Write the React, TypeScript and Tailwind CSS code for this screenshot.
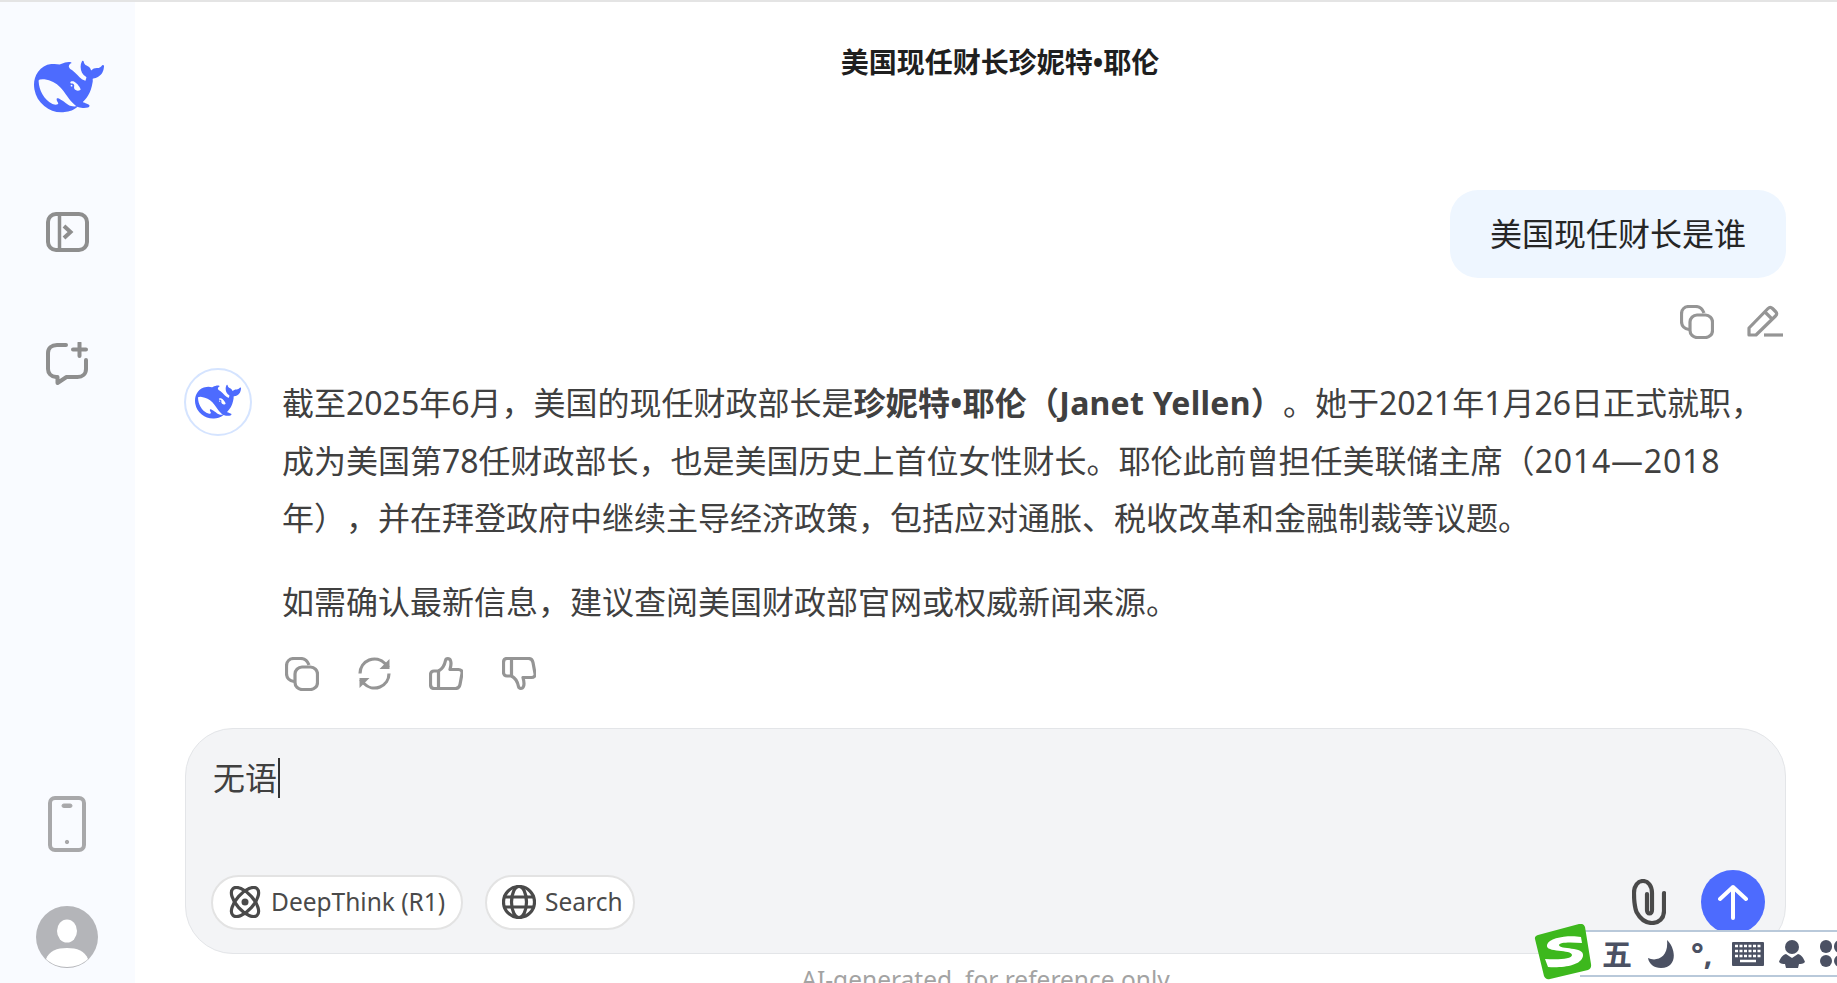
const whale =
  "M23.748 4.482c-.254-.124-.364.113-.512.234-.051.039-.094.09-.137.136-.372.397-.806.657-1.373.626-.829-.046-1.537.214-2.163.848-.133-.782-.575-1.248-1.247-1.548-.352-.156-.708-.311-.955-.65-.172-.241-.219-.51-.305-.774-.055-.16-.11-.323-.293-.35-.2-.031-.278.136-.356.276-.313.572-.434 1.202-.422 1.84.027 1.436.633 2.58 1.838 3.393.137.093.172.187.129.323-.082.28-.18.552-.266.833-.055.179-.137.217-.329.14a5.526 5.526 0 01-1.736-1.18c-.857-.828-1.631-1.742-2.597-2.458a11.365 11.365 0 00-.689-.471c-.985-.957.13-1.743.388-1.836.27-.098.093-.432-.779-.428-.872.004-1.67.295-2.687.684a3.055 3.055 0 01-.465.137 9.597 9.597 0 00-2.883-.102c-1.885.21-3.39 1.102-4.497 2.623C.082 8.606-.231 10.684.152 12.85c.403 2.284 1.569 4.175 3.36 5.653 1.858 1.533 3.997 2.284 6.438 2.14 1.482-.085 3.133-.284 4.994-1.86.47.234.962.327 1.78.397.63.059 1.236-.03 1.705-.128.735-.156.684-.837.419-.961-2.155-1.004-1.682-.595-2.113-.926 1.096-1.296 2.746-2.642 3.392-7.003.05-.347.007-.565 0-.845-.004-.17.035-.237.23-.256a4.173 4.173 0 001.545-.475c1.396-.763 1.96-2.015 2.093-3.517.02-.23-.004-.467-.247-.588zM11.581 18c-2.089-1.642-3.102-2.183-3.52-2.16-.392.024-.321.471-.235.763.09.288.207.486.371.739.114.167.192.416-.113.603-.673.416-1.842-.14-1.897-.167-1.361-.802-2.5-1.86-3.301-3.307-.774-1.393-1.224-2.887-1.298-4.482-.02-.386.093-.522.477-.592a4.696 4.696 0 011.529-.039c2.132.312 3.946 1.265 5.468 2.774.868.86 1.525 1.887 2.202 2.891.72 1.066 1.494 2.082 2.48 2.914.348.292.625.514.891.677-.802.09-2.14.11-3.054-.614zm1-6.44a.306.306 0 01.415-.287.302.302 0 01.2.288.306.306 0 01-.31.307.303.303 0 01-.304-.308zm3.11 1.596c-.2.081-.399.151-.59.16a1.245 1.245 0 01-.798-.254c-.274-.23-.47-.358-.552-.758a1.73 1.73 0 01.016-.588c.07-.327-.008-.537-.239-.727-.187-.156-.426-.199-.688-.199a.559.559 0 01-.254-.078c-.11-.054-.2-.19-.114-.358.028-.054.16-.186.192-.21.356-.202.767-.136 1.146.016.352.144.618.408 1.001.782.391.451.462.576.685.914.176.265.336.537.445.848.067.195-.019.354-.25.452z";

function Whale({ className }: { className: string }) {
  return (
    <svg viewBox="0 0 24 24" className={className} fill="#4d6bfe">
      <path d={whale} fillRule="nonzero" />
    </svg>
  );
}

function PanelIcon() {
  return (
    <svg viewBox="0 0 43 40" className="h-[40px] w-[43px]" fill="none" stroke="#8e8e8e" strokeWidth="4">
      <rect x="2" y="2" width="39" height="36" rx="8" />
      <path d="M13.500 2v36" strokeWidth="3.500" />
      <path d="M18 14l6.500 6-6.500 6" strokeWidth="4" />
    </svg>
  );
}

function NewChatIcon() {
  return (
    <svg viewBox="0 0 42 43" className="h-[43px] w-[42px]" fill="none" stroke="#8e8e8e" strokeWidth="4" strokeLinecap="round">
      <path d="M20 3H11C5.500 3 2 6.500 2 11v16c0 4 3 7.500 8 8h1.500v6l9-6h11c5 0 8.500-3 8.500-8v-9" strokeLinejoin="round" />
      <path d="M33.500 1v13M27 7.500h13" />
    </svg>
  );
}

function PhoneIcon() {
  return (
    <svg viewBox="0 0 38 56" className="h-[56px] w-[38px]" fill="none" stroke="#a8a8aa" strokeWidth="4">
      <rect x="2" y="2" width="34" height="52" rx="5" />
      <rect x="14" y="8" width="10" height="3.500" rx="1.750" fill="#a8a8aa" strokeWidth="1" />
      <circle cx="19" cy="46" r="1.700" fill="#a8a8aa" strokeWidth="1" />
    </svg>
  );
}

function UserIcon() {
  return (
    <svg viewBox="0 0 62 62" className="h-[62px] w-[62px]">
      <circle cx="31" cy="31" r="31" fill="#b4b5b9" />
      <ellipse cx="31" cy="25" rx="10" ry="11.500" fill="#fff" />
      <path d="M10 53c3-8 11-11 21-11s18 3 21 11c-5 5-13 8-21 8s-16-3-21-8z" fill="#fff" />
    </svg>
  );
}

function CopyIcon() {
  return (
    <svg viewBox="0 0 34 34" className="h-[34px] w-[34px]" fill="none" stroke="#959595" strokeWidth="3.200">
      <rect x="10" y="10" width="22.500" height="22.500" rx="7" />
      <path d="M9 24.500C4.500 24 1.500 21 1.500 16.500V9c0-4.500 3-7.500 7.500-7.500h6.500c4 0 7 2.500 8.500 6.500" />
    </svg>
  );
}

function PencilIcon() {
  return (
    <svg viewBox="0 0 36 32" className="h-[32px] w-[36px]" fill="none" stroke="#959595" strokeWidth="3.200" strokeLinejoin="round">
      <path d="M2 23L21 3.500c1.500-1.500 3-1.500 4.500 0l3 3c1.500 1.500 1.500 3 0 4.500L9 30H2z" />
      <path d="M18 7l7.500 7.500" />
      <path d="M17 30h19" />
    </svg>
  );
}

function RefreshIcon() {
  return (
    <svg viewBox="0 0 33 33" className="h-[33px] w-[33px]" fill="none" stroke="#959595" strokeWidth="3.200">
      <path d="M2 16.500A14.500 14.500 0 0 1 27 6.500l3.500 4" />
      <path d="M31 16.500A14.500 14.500 0 0 1 6 26.500l-3.500-4" />
      <path d="M31.500 2v10h-10z" fill="#959595" stroke="none" />
      <path d="M1.500 31V21h10z" fill="#959595" stroke="none" />
    </svg>
  );
}

function ThumbUpIcon() {
  return (
    <svg viewBox="0 0 34 33" className="h-[33px] w-[34px]" fill="none" stroke="#959595" strokeWidth="3.200" strokeLinejoin="round">
      <path d="M9.500 14H5c-2 0-3.500 1.500-3.500 3.500v10c0 2.500 1.500 4 3.500 4h4.500z" />
      <path d="M9.500 14c3-1.500 6-5.500 7-10.500.5-2.500 4-2.500 5 0 1 2.500.5 5.500-.5 9h8.500c2.500 0 4 1.500 3.500 4l-2 11c-.5 2.500-2 4-4.500 4H9.500" />
    </svg>
  );
}

function ThumbDownIcon() {
  return (
    <svg viewBox="0 0 34 33" className="h-[33px] w-[34px]" fill="none" stroke="#959595" strokeWidth="3.200" strokeLinejoin="round">
      <path d="M9.500 19H5c-2 0-3.500-1.500-3.500-3.500v-10c0-2.500 1.500-4 3.500-4h4.500z" />
      <path d="M9.500 19c3 1.500 6 5.500 7 10.500.5 2.500 4 2.500 5 0 1-2.500.5-5.500-.5-9h8.500c2.500 0 4-1.500 3.500-4l-2-11c-.5-2.500-2-4-4.500-4H9.500" />
    </svg>
  );
}

function AtomIcon() {
  return (
    <svg viewBox="0 0 32 32" className="h-[32px] w-[32px]" fill="none" stroke="#4a4a4a" strokeWidth="3.200">
      <ellipse cx="16" cy="16" rx="8.500" ry="18" transform="rotate(-42 16 16)" />
      <ellipse cx="16" cy="16" rx="8.500" ry="18" transform="rotate(42 16 16)" />
      <circle cx="16" cy="16" r="3.500" fill="#4a4a4a" stroke="none" />
    </svg>
  );
}

function GlobeIcon() {
  return (
    <svg viewBox="0 0 34 34" className="h-[34px] w-[34px]" fill="none" stroke="#4a4a4a" strokeWidth="3.200">
      <circle cx="17" cy="17" r="15.500" />
      <ellipse cx="17" cy="17" rx="7.500" ry="15.500" />
      <path d="M1.500 12h31M1.500 22h31" />
    </svg>
  );
}

function ClipIcon() {
  return (
    <svg viewBox="0 0 34 46" className="h-[46px] w-[34px]" fill="none" stroke="#4a4a4a" strokeWidth="4.200" strokeLinecap="round">
      <path d="M32 14v18c0 7.500-5 12-12 12S8 39.500 4.500 33C2 26 2 20 2 14 2 6.500 6 2 11 2s9 4.500 9 12v17c0 2-1 3.500-2.500 3.500S15 33 15 31V15" />
    </svg>
  );
}

function ImeBar() {
  return (
    <div className="absolute left-[1534px] top-[924px] flex h-[54px] w-[303px] items-center">
      <div className="absolute left-[46px] top-[6px] flex h-[47px] w-[257px] items-center overflow-hidden border-y-2 border-[#b9c9da] bg-white pl-[22px] text-[#4b5163]">
        <span className="w-[46px] shrink-0 text-[30px] leading-none font-bold">五</span>
        <svg viewBox="0 0 28 28" className="h-[28px] w-[28px] shrink-0" fill="#4b5163">
          <path d="M19 0c9 8 11 28-6 28C6 28 1 24 0 18c8 4 21 0 19-18z" />
        </svg>
        <span className="ml-[15px] w-[26px] shrink-0 text-[30px] leading-none font-bold">°,</span>
        <svg viewBox="0 0 32 24" className="ml-[15px] h-[24px] w-[32px] shrink-0">
          <rect width="32" height="24" rx="1" fill="#4b5163" />
          <path d="M3 4h26M3 9h26M3 14h26" stroke="#fff" strokeWidth="2.500" strokeDasharray="3 1.500" />
          <path d="M8 19h16" stroke="#fff" strokeWidth="2.500" />
        </svg>
        <svg viewBox="0 0 26 28" className="ml-[15px] h-[28px] w-[26px] shrink-0" fill="#4b5163">
          <circle cx="13" cy="7" r="7" />
          <path d="M7 14c-4 1-6 5-7 8 2 2 4 2 6 2l1 4h12l1-4c2 0 4 0 6-2-1-3-3-7-7-8l-6 4z" />
        </svg>
        <div className="ml-[15px] grid h-[27px] w-[26px] shrink-0 grid-cols-2 gap-[2px]">
          <span className="rounded-[6px] bg-[#4b5163]" />
          <span className="rounded-[6px] bg-[#4b5163]" />
          <span className="rounded-[6px] bg-[#4b5163]" />
          <span className="rounded-[6px] bg-[#4b5163]" />
        </div>
      </div>
      <svg viewBox="0 0 58 56" className="absolute left-0 top-0 h-[56px] w-[58px]">
        <path d="M4 11L45 0c3-.8 5 .5 6 3l6 37c.5 3-.5 5-3 6L16 55c-3 .8-5-.5-6-3L1 15c-.5-2 1-3.500 3-4z" fill="#3db81d" />
        <path d="M47 13C36 11 15 13 13 21c-2 8 25 4 25 10 0 4-13 5-27 4l3 8c14 1 33-1 35-11 2-10-24-6-24-11 0-3 12-3 23-2z" fill="#fff" />
      </svg>
    </div>
  );
}

export default function App() {
  return (
    <div
      className="relative flex h-[983px] w-[1837px] flex-col overflow-hidden bg-white text-[#404040] [text-spacing-trim:space-all]"
      style={{ fontFamily: '"Noto Sans", "Noto Sans CJK SC", sans-serif' }}
    >
      <div className="h-[2px] shrink-0 bg-[#e4e4e4]" />
      <div className="flex min-h-0 flex-1">
        <aside className="flex w-[135px] shrink-0 flex-col items-center bg-[#f9fbff]">
          <Whale className="mt-[50px] ml-[3px] h-[70px] w-[70px]" />
          <div className="mt-[90px] mr-[1px]">
            <PanelIcon />
          </div>
          <div className="mt-[90px] mr-[1px]">
            <NewChatIcon />
          </div>
          <div className="mt-auto mr-[1px]">
            <PhoneIcon />
          </div>
          <div className="mt-[54px] mr-[1px] mb-[15px]">
            <UserIcon />
          </div>
        </aside>

        <main className="flex min-w-0 flex-1 flex-col pr-[51px] pl-[50px]">
          <h1 className="mt-[40px] pl-[29px] text-center text-[28px] leading-[40px] font-bold text-[#1f1f1f]">
            美国现任财长珍妮特•耶伦
          </h1>

          <div className="mt-[108px] flex justify-end">
            <div className="flex h-[88px] w-[336px] items-center justify-center rounded-[28px] bg-[#eef6ff] text-[32px] text-[#262626]">
              美国现任财长是谁
            </div>
          </div>
          <div className="mt-[27px] flex justify-end gap-[33px] pr-[3px]">
            <CopyIcon />
            <PencilIcon />
          </div>

          <div className="mt-[29px] flex">
            <div className="-ml-[1px] flex h-[68px] w-[68px] shrink-0 items-center justify-center rounded-full border-2 border-[#d5e4ff]">
              <Whale className="h-[46px] w-[46px]" />
            </div>
            <div className="ml-[29px] min-w-0 flex-1">
              <div className="text-[32px] leading-[57.6px]">
                <p className="mt-[6px] pl-[1px]">
                  截至2025年6月，美国的现任财政部长是<strong className="font-bold tracking-[0.25px]">珍妮特•耶伦（Janet Yellen）</strong>。她于2021年1月26日正式就职，成为美国第78任财政部长，也是美国历史上首位女性财长。耶伦此前曾担任美联储主席（<span className="tracking-[0.8px]">2014—2018</span>年），并在拜登政府中继续主导经济政策，包括应对通胀、税收改革和金融制裁等议题。
                </p>
                <p className="mt-[26px] pl-[1px]">如需确认最新信息，建议查阅美国财政部官网或权威新闻来源。</p>
              </div>
              <div className="mt-[27px] flex gap-[38.500px] pl-[4px]">
                <CopyIcon />
                <RefreshIcon />
                <ThumbUpIcon />
                <ThumbDownIcon />
              </div>
            </div>
          </div>

          <div className="mt-[37px] flex h-[226px] shrink-0 flex-col rounded-[48px] border border-[#e3e5e8] bg-[#f3f4f6] pt-[25px] pr-[20px] pb-[19px] pl-[25px]">
            <div className="ml-[2px] flex h-[48px] items-center text-[32px]">
              无语<span className="ml-[1px] h-[40px] w-[2px] bg-[#333]" />
            </div>
            <div className="mt-auto flex items-center">
              <div className="flex h-[55px] w-[252px] items-center gap-[10px] rounded-full border-2 border-[#e3e3e3] bg-white pl-[16px] text-[24.500px] text-[#4a4a4a]">
                <AtomIcon />
                DeepThink (R1)
              </div>
              <div className="ml-[22px] flex h-[55px] w-[150px] items-center gap-[9px] rounded-full border-2 border-[#e3e3e3] bg-white pl-[15px] text-[24.500px] text-[#4a4a4a]">
                <GlobeIcon />
                Search
              </div>
              <div className="ml-auto">
                <ClipIcon />
              </div>
              <div className="ml-[35px] flex h-[64px] w-[64px] items-center justify-center rounded-full bg-[#4d6bfe]">
                <svg viewBox="0 0 30 36" className="h-[36px] w-[30px]" fill="none" stroke="#fff" strokeWidth="4" strokeLinecap="round" strokeLinejoin="round">
                  <path d="M15 34V3M2 15L15 3l13 12" />
                </svg>
              </div>
            </div>
          </div>

          <div className="mt-[9px] text-center text-[24.500px] leading-[34px] text-[#a3a3a3]">
            AI-generated, for reference only
          </div>
        </main>
      </div>
      <ImeBar />
    </div>
  );
}
